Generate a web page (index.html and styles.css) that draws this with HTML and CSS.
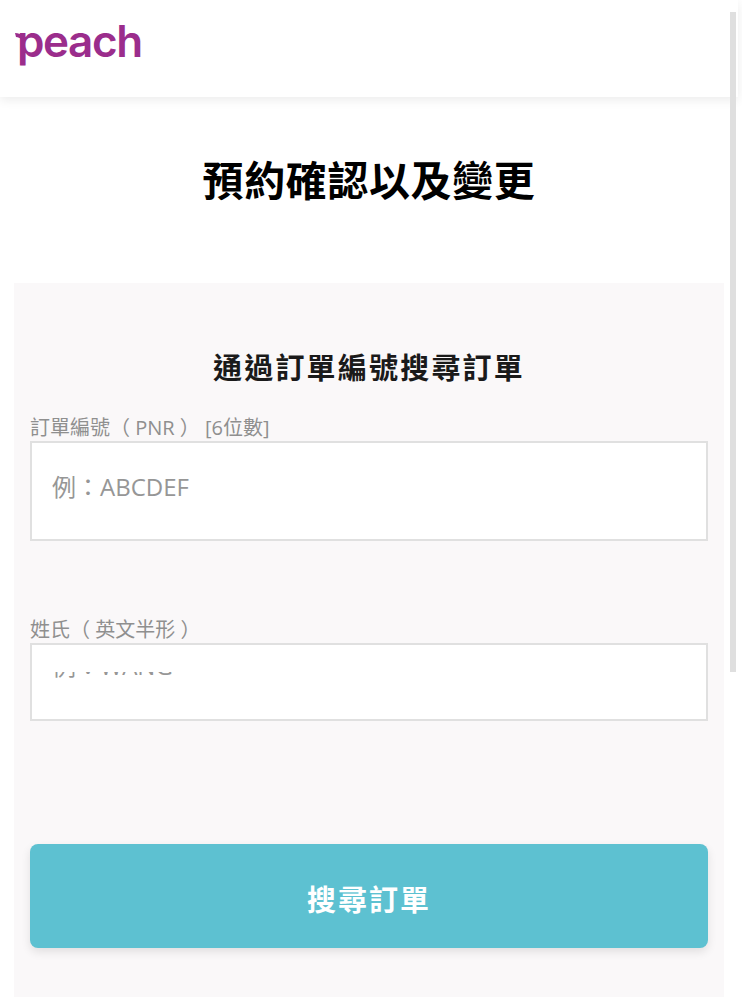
FILE: index.html
```html
<!DOCTYPE html>
<html lang="zh-Hant">
<head>
    <meta charset="UTF-8">
    <meta name="viewport" content="width=device-width, initial-scale=1.0">
    <title>預約確認以及變更</title>
    <link rel="stylesheet" href="styles.css">
</head>
<body>
    <div class="page">
        <header class="site-header">
            <a class="logo" href="#">
                <svg class="logo-leaf" width="10" height="12" viewBox="0 0 10 12"><path d="M0 0 C3 0 7 1 9 4 L9 12 L6 12 L6 6 C5 5 3 4 1 4 Z" fill="#9b2d8c"/></svg>
                <span class="logo-text">peach</span>
            </a>
        </header>

        <main class="content">
            <h1 class="page-title">預約確認以及變更</h1>

            <section class="search-panel">
                <h2 class="panel-title">通過訂單編號搜尋訂單</h2>

                <div class="field field-pnr">
                    <label class="field-label" for="pnr">訂單編號（ PNR ） [6位數]</label>
                    <input class="field-input" id="pnr" type="text" placeholder="例：ABCDEF">
                </div>

                <div class="field field-name">
                    <div class="field-label">姓氏（ 英文半形 ）</div>
                    <div class="field-box">
                        <div class="clipped-hint"><span>例：WANG</span></div>
                    </div>
                </div>

                <button class="search-button" type="button">搜尋訂單</button>
            </section>
        </main>
    </div>

    <div class="scroll-thumb"></div>
</body>
</html>
```

FILE: styles.css
```css
html, body {
    margin: 0;
    height: 997px;
    overflow: hidden;
    background: #fff;
}

body {
    font-family: "Open Sans", "Noto Sans CJK TC", sans-serif;
}

.page {
    width: 738px;
}

.site-header {
    height: 97px;
    box-shadow: 0 3px 10px rgba(0, 0, 0, 0.08);
    display: flex;
    align-items: flex-start;
    padding-left: 15px;
}

.logo {
    position: relative;
    display: block;
    text-decoration: none;
    color: #9b2d8c;
}

.logo-leaf {
    position: absolute;
    left: 0;
    top: 33px;
}

.logo-text {
    display: block;
    font-family: "Inter", sans-serif;
    font-size: 44px;
    font-weight: 600;
    line-height: 82px;
    letter-spacing: -1.4px;
    padding-left: 2px;
}

.content {
    padding: 0 14px;
}

.page-title {
    margin: 0;
    padding-top: 55px;
    height: 131px;
    font-size: 41px;
    line-height: 56px;
    font-weight: 700;
    letter-spacing: 0.6px;
    text-align: center;
    color: #000;
}

.search-panel {
    background: #faf8f9;
    height: 714px;
    padding: 0 16px;
}

.panel-title {
    margin: 0;
    padding-top: 64px;
    font-size: 29px;
    line-height: 42px;
    font-weight: 700;
    letter-spacing: 2.2px;
    text-align: center;
    color: #1a1a1a;
}

.field-label {
    display: block;
    font-size: 20px;
    line-height: 26px;
    color: #8f8f8f;
}

.field-pnr {
    margin-top: 26px;
}

.field-input {
    display: block;
    box-sizing: border-box;
    width: 100%;
    height: 100px;
    margin: 0;
    padding: 0 20px 10px;
    border: 2px solid #e0e0e0;
    border-radius: 0;
    background: #fff;
    font-family: inherit;
    font-size: 24px;
    outline: none;
}

.field-input::placeholder {
    color: #969696;
    opacity: 1;
}

.field-name {
    margin-top: 76px;
}

.field-box {
    box-sizing: border-box;
    height: 78px;
    border: 2px solid #e0e0e0;
    background: #fff;
    padding: 27px 20px 0;
}

/* only the lower edge of the hint shows through */
.clipped-hint {
    height: 8px;
    overflow: hidden;
    font-size: 24px;
    line-height: 32px;
    color: #969696;
}

.clipped-hint span {
    display: block;
    margin-top: -22px;
}

.search-button {
    display: block;
    width: 100%;
    height: 104px;
    margin-top: 123px;
    padding: 4px 0 0;
    border: 0;
    border-radius: 8px;
    background: #5dc1d1;
    box-shadow: 0 4px 10px rgba(0, 0, 0, 0.1);
    color: #fff;
    font-family: inherit;
    font-size: 29px;
    font-weight: 700;
    letter-spacing: 2px;
}

.scroll-thumb {
    position: absolute;
    left: 730px;
    top: 12px;
    width: 6px;
    height: 660px;
    background: #dfdfdf;
}
```
